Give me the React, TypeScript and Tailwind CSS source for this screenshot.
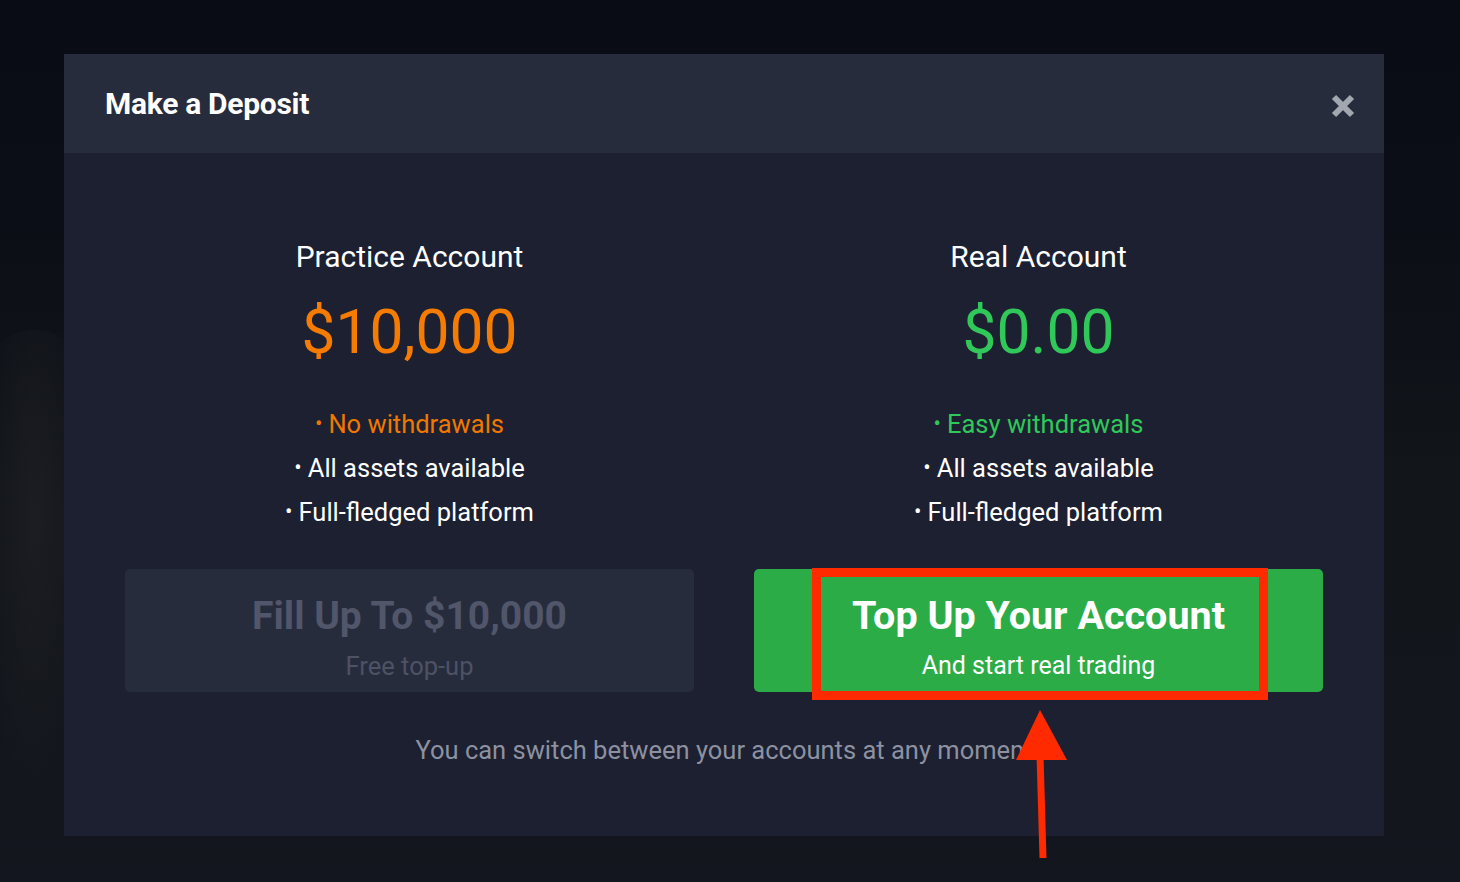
import React from "react";

const font = { fontFamily: "Roboto, 'Noto Sans', Arial, sans-serif" };

function Bullet({ text, color }: { text: string; color: string }) {
  return (
    <div className={`flex items-center justify-center h-[44px] text-[25.5px] ${color}`}>
      <span className="text-[22px] mr-[6px] leading-none">•</span>
      <span>{text}</span>
    </div>
  );
}

export default function App() {
  return (
    <div
      className="relative w-[1460px] h-[882px] overflow-hidden bg-[linear-gradient(180deg,#090c14_0%,#0b0e16_25%,#121519_55%,#13161e_100%)]"
      style={font}
    >
      <div className="absolute left-[-20px] top-[330px] w-[110px] h-[480px] rounded-full bg-[radial-gradient(ellipse_at_50%_40%,#1b1d22_0%,rgba(20,22,28,0)_70%)]" />

      {/* Modal */}
      <div className="absolute left-[64px] top-[54px] w-[1320px] h-[782px] bg-[#1c2031] flex flex-col">
        <div className="h-[99px] bg-[#272c3d] flex items-center justify-between pl-[41px] pr-[28px]">
          <div className="text-white font-bold text-[30px] tracking-[-0.3px]">Make a Deposit</div>
          <svg width="26" height="26" viewBox="0 0 26 26" className="mt-[4px]">
            <path d="M4 4 L22 22 M22 4 L4 22" stroke="#a3a7b0" strokeWidth="6" strokeLinecap="butt" />
          </svg>
        </div>

        <div className="flex-1 px-[61px] pt-[86px]">
          <div className="grid grid-cols-2 gap-x-[60px]">
            <div className="flex flex-col items-center">
              <div className="text-white text-[30px] leading-[36px]">Practice Account</div>
              <div className="mt-[26px] text-[#f57c00] text-[60.5px] leading-[64px]">$10,000</div>
              <div className="mt-[37px] flex flex-col">
                <Bullet text="No withdrawals" color="text-[#f07800]" />
                <Bullet text="All assets available" color="text-white" />
                <Bullet text="Full-fledged platform" color="text-white" />
              </div>
              <div className="mt-[35px] w-full h-[123px] rounded-[5px] bg-[#272c3d] flex flex-col items-center justify-center pt-[14px]">
                <div className="text-[#51566a] font-bold text-[39px] leading-[44px]">Fill Up To $10,000</div>
                <div className="text-[#4d5264] text-[25.5px] leading-[30px] mt-[13px]">Free top-up</div>
              </div>
            </div>

            <div className="flex flex-col items-center">
              <div className="text-white text-[30px] leading-[36px]">Real Account</div>
              <div className="mt-[26px] text-[#2fc859] text-[60.5px] leading-[64px]">$0.00</div>
              <div className="mt-[37px] flex flex-col">
                <Bullet text="Easy withdrawals" color="text-[#2fc859]" />
                <Bullet text="All assets available" color="text-white" />
                <Bullet text="Full-fledged platform" color="text-white" />
              </div>
              <div className="mt-[35px] w-full h-[123px] rounded-[5px] bg-[#2bac46] flex flex-col items-center justify-center pt-[14px]">
                <div className="text-white font-bold text-[39.5px] leading-[44px]">Top Up Your Account</div>
                <div className="text-white text-[25px] leading-[30px] mt-[13px]">And start real trading</div>
              </div>
            </div>
          </div>

          <div className="mt-[43px] text-center text-[#8d91a0] text-[25.5px] leading-[30px]">
            You can switch between your accounts at any moment
          </div>
        </div>
      </div>

      {/* Annotation: red highlight box */}
      <div className="absolute left-[812px] top-[568px] w-[456px] h-[132px] border-[9px] border-[#ff2a00]" />

      {/* Annotation: arrow */}
      <svg className="absolute left-[1000px] top-[700px]" width="90" height="170" viewBox="0 0 90 170">
        <path d="M40 10 L67 60 L16 60 Z" fill="#ff2a00" />
        <path d="M40 55 L43 158" stroke="#ff2a00" strokeWidth="7" />
      </svg>
    </div>
  );
}
